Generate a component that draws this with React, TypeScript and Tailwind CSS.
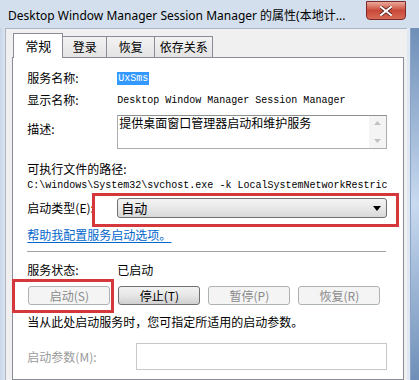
const cjk = "font-['Noto_Sans_CJK_SC','Noto_Sans',sans-serif]";
const mono = "font-['Liberation_Mono','Noto_Sans_CJK_SC',monospace]";

const Tab = ({ label, active, w }: { label: string; active?: boolean; w: string }) =>
  active ? (
    <div
      className={`${w} h-[25px] -mb-px z-10 relative bg-white border border-b-0 border-[#898c95] flex items-center justify-center text-[13px] text-black`}
    >
      {label}
    </div>
  ) : (
    <div
      className={`${w} h-[21px] -ml-px bg-gradient-to-b from-[#f3f3f3] to-[#e3e3e3] border border-b-0 border-[#898c95] flex items-center justify-center text-[12px] text-black`}
    >
      {label}
    </div>
  );

const Button = ({ label, disabled }: { label: string; disabled?: boolean }) => (
  <div
    className={
      disabled
        ? "w-[82px] h-[19px] rounded-[3px] border border-[#adb2b5] bg-[#f4f4f4] text-[#8a8a8a] flex items-center justify-center text-[12px]"
        : "w-[82px] h-[19px] rounded-[3px] border border-[#707070] bg-gradient-to-b from-[#f2f2f2] via-[#e6e6e6] to-[#d0d0d0] text-black flex items-center justify-center text-[12px]"
    }
  >
    {label}
  </div>
);

export default function App() {
  return (
    <div className={`w-[419px] h-[380px] overflow-hidden bg-[#d3dfed] flex flex-col ${cjk}`}>
      {/* title bar */}
      <div className="h-[28px] flex items-start relative">
        <div className="pl-[8px] pt-[7px] text-[12px] text-black whitespace-nowrap font-['Noto_Sans','Noto_Sans_CJK_SC',sans-serif]">
          Desktop Window Manager Session Manager 的属性(本地计...
        </div>
        <div className="absolute left-[366px] top-[1px] w-[40px] h-[19px] rounded-b-[4px] border border-[#7a2a2a] bg-gradient-to-b from-[#e9a99a] via-[#c9483a] to-[#d86a55] flex items-center justify-center">
          <svg width="12" height="10" viewBox="0 0 12 10">
            <path d="M1 1 L11 9 M11 1 L1 9" stroke="#4a1a14" strokeWidth="3.4" strokeLinecap="square" />
            <path d="M1 1 L11 9 M11 1 L1 9" stroke="#ffffff" strokeWidth="2" strokeLinecap="square" />
          </svg>
        </div>
      </div>

      {/* body */}
      <div className="flex flex-1 min-h-0">
        <div className="w-[6px] bg-gradient-to-r from-[#c8d6e8] to-[#dbe5f1]" />
        <div className="flex-1 bg-[#f0f0f0] border-l border-t border-[#aab6c4] flex flex-col pl-[6px] pr-[3px] pt-[3px]">
          {/* tabs */}
          <div className="flex items-end h-[25px] pl-[1px]">
            <Tab label="常规" active w="w-[50px]" />
            <Tab label="登录" w="w-[45px]" />
            <Tab label="恢复" w="w-[49px]" />
            <Tab label="依存关系" w="w-[59px]" />
          </div>

          {/* panel */}
          <div className="flex-1 bg-white border border-[#898c95] relative pl-[14px] pr-[16px] text-[12px] text-black">
            <div className="h-[12px]" />
            <div className="flex items-center h-[16px]">
              <span className="w-[90px]">服务名称:</span>
              <span className={`${mono} text-[10px] bg-[#3399ff] text-white px-[1px] leading-[13px]`}>UxSms</span>
            </div>
            <div className="h-[6px]" />
            <div className="flex items-center h-[16px]">
              <span className="w-[90px]">显示名称:</span>
              <span className={`${mono} text-[10px]`}>Desktop Window Manager Session Manager</span>
            </div>
            <div className="h-[7px]" />
            <div className="flex items-start h-[34px]">
              <span className="w-[90px] pt-[5px]">描述:</span>
              <div className="flex-1 h-[34px] border border-[#abadb3] border-t-[#8e8f8f] flex">
                <div className="flex-1 pl-[1px] leading-[14px]">提供桌面窗口管理器启动和维护服务</div>
                <div className="w-[17px] bg-[#f4f4f4] flex flex-col items-center justify-between py-[5px]">
                  <svg width="7" height="4" viewBox="0 0 7 4">
                    <path d="M0 4 L3.5 0 L7 4 Z" fill="#c2c2c2" />
                  </svg>
                  <svg width="7" height="4" viewBox="0 0 7 4">
                    <path d="M0 0 L3.5 4 L7 0 Z" fill="#c2c2c2" />
                  </svg>
                </div>
              </div>
            </div>
            <div className="h-[12px]" />
            <div className="h-[16px] flex items-center">可执行文件的路径:</div>
            <div className={`h-[17px] flex items-center ${mono} text-[10px] whitespace-nowrap overflow-hidden`}>
              C:\windows\System32\svchost.exe -k LocalSystemNetworkRestric
            </div>
            <div className="h-[4px]" />
            <div className="flex items-center h-[20px]">
              <span className="w-[90px]">启动类型(E):</span>
              <div className="flex-1 h-[20px] rounded-[3px] border border-[#707070] bg-gradient-to-b from-[#f4f4f4] via-[#e8e8e8] to-[#d9d9d9] flex items-center justify-between pl-[3px] pr-[5px]">
                <span className="text-[13px]">自动</span>
                <svg width="8" height="5" viewBox="0 0 8 5">
                  <path d="M0 0 L8 0 L4 5 Z" fill="#000" />
                </svg>
              </div>
            </div>
            <div className="h-[9px]" />
            <div className="h-[16px] flex items-center">
              <span className="text-[#0066cc] underline underline-offset-2">帮助我配置服务启动选项。</span>
            </div>
            <div className="h-[8px]" />
            <div className="h-px bg-[#a0a0a0] mr-[1px]" />
            <div className="h-[10px]" />
            <div className="flex items-center h-[16px]">
              <span className="w-[90px]">服务状态:</span>
              <span>已启动</span>
            </div>
            <div className="h-[8px]" />
            <div className="flex gap-[8px] pl-[1px]">
              <Button label="启动(S)" disabled />
              <Button label="停止(T)" />
              <Button label="暂停(P)" disabled />
              <Button label="恢复(R)" disabled />
            </div>
            <div className="h-[9px]" />
            <div className="h-[16px] flex items-center">当从此处启动服务时，您可指定所适用的启动参数。</div>
            <div className="h-[13px]" />
            <div className="flex items-center h-[27px]">
              <span className="w-[109px] text-[#9a9a9a]">启动参数(M):</span>
              <div className="flex-1 h-[27px] border border-[#c8c8c8] bg-white" />
            </div>

            {/* annotation boxes */}
            <div className="absolute left-[79px] top-[135px] w-[307px] h-[34px] border-[3px] border-[#d4383c]" />
            <div className="absolute left-[-1px] top-[221px] w-[102px] h-[34px] border-[3px] border-[#d4383c]" />
          </div>
        </div>
        <div className="w-[13px] flex">
          <div className="w-[3px] bg-[#dfe8f3]" />
          <div className="flex-1 bg-gradient-to-b from-[#6f8fb8] via-[#c8daf0] to-[#6f8fb8] border-l border-[#8aa4c6]" />
        </div>
      </div>
    </div>
  );
}
